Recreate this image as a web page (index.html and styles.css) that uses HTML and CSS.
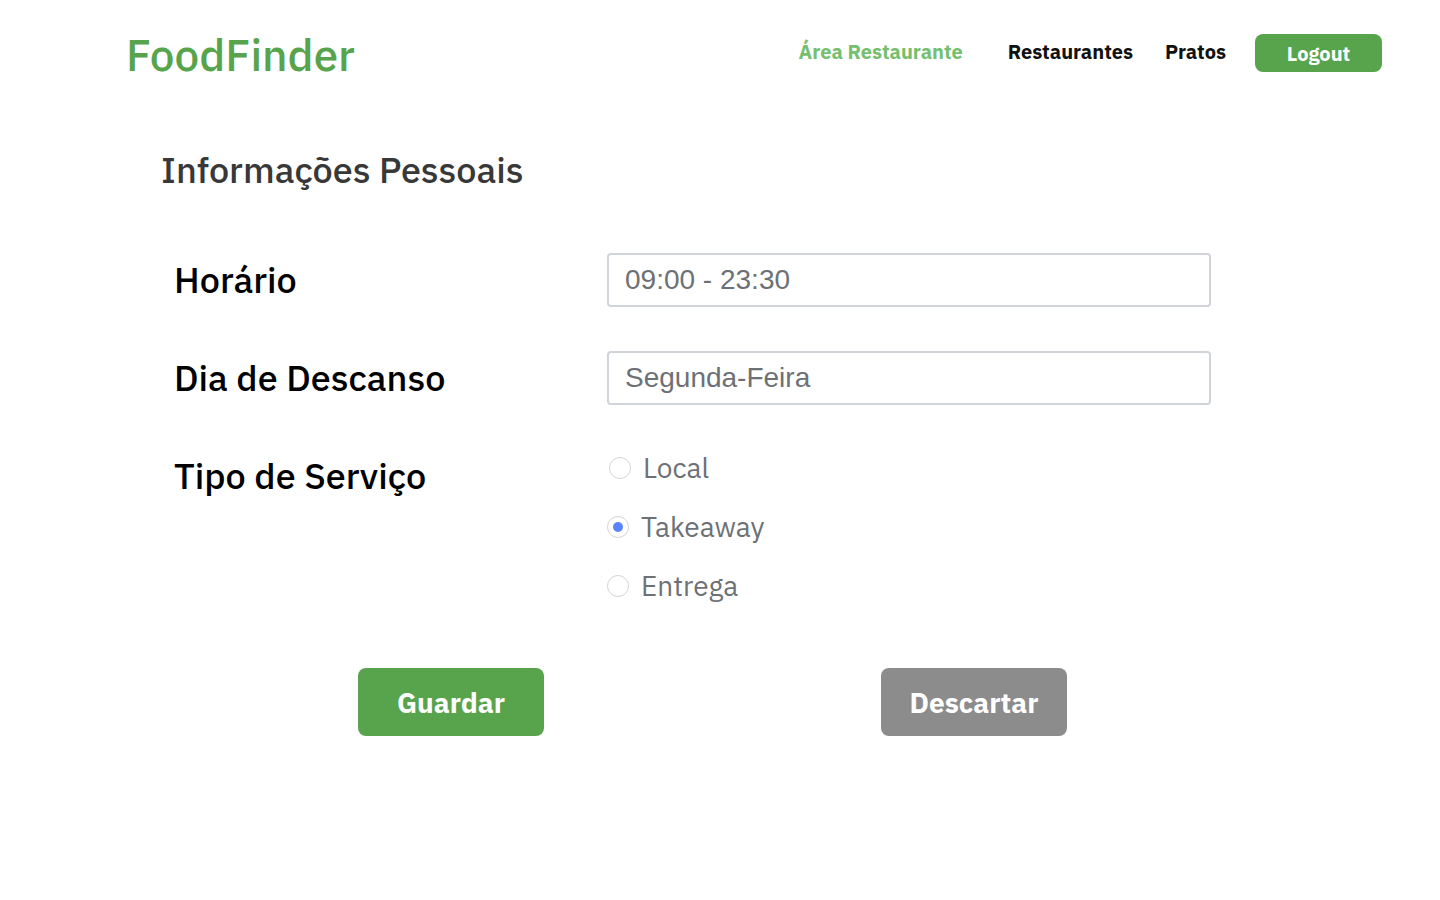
FILE: index.html
```html
<!DOCTYPE html>
<html lang="pt">
<head>
<meta charset="utf-8">
<meta name="viewport" content="width=device-width, initial-scale=1">
<title>FoodFinder</title>
<link rel="stylesheet" href="styles.css">
</head>
<body>
<header class="header">
  <a class="brand" href="#">FoodFinder</a>
  <nav class="nav">
    <a class="nav-link nav-link-active" href="#">Área Restaurante</a>
    <a class="nav-link" href="#">Restaurantes</a>
    <a class="nav-link nav-link-last" href="#">Pratos</a>
    <button class="logout" type="button">Logout</button>
  </nav>
</header>
<main class="main">
  <h1 class="title">Informações Pessoais</h1>
  <form class="form">
    <div class="row">
      <label class="label" for="horario">Horário</label>
      <input class="input" id="horario" type="text" value="09:00 - 23:30">
    </div>
    <div class="row">
      <label class="label" for="descanso">Dia de Descanso</label>
      <input class="input" id="descanso" type="text" value="Segunda-Feira">
    </div>
    <div class="row" role="radiogroup" aria-labelledby="servico">
      <span class="label" id="servico">Tipo de Serviço</span>
      <div class="options">
        <label class="option option-first"><input class="radio" type="radio" name="servico">Local</label>
        <label class="option"><input class="radio" type="radio" name="servico" checked>Takeaway</label>
        <label class="option"><input class="radio" type="radio" name="servico">Entrega</label>
      </div>
    </div>
    <div class="actions">
      <button class="button button-save" type="button">Guardar</button>
      <button class="button button-discard" type="button">Descartar</button>
    </div>
  </form>
</main>
</body>
</html>
```
FILE: styles.css
```css
* { box-sizing: border-box; }
body {
  margin: 0;
  background: #fff;
  color: #000;
  font-family: "IBM Plex Sans", "Noto Sans", sans-serif;
}
a { text-decoration: none; }
button { border: 0; font-family: inherit; font-weight: 700; color: #fff; cursor: pointer; }
.header {
  display: flex;
  justify-content: space-between;
  padding: 26px 58px 0 126px;
}
.brand { color: #58a44c; font-size: 44px; line-height: 58px; font-weight: 500; }
.nav { display: flex; align-items: flex-start; padding-top: 8px; }
.nav-link { margin-right: 32px; color: #111; font-size: 20px; line-height: 36px; font-weight: 700; }
.nav-link-active { margin-right: 45px; color: #77bf70; }
.nav-link-last { margin-right: 29px; }
.logout {
  width: 127px;
  height: 38px;
  padding: 0;
  border-radius: 8px;
  background: #58a44c;
  font-size: 20px;
}
.main { padding: 62px 229px 40px 161px; }
.title { margin: 0; color: #383838; font-size: 36px; line-height: 48px; font-weight: 500; }
.form { padding: 59px 0 0 13px; }
.row {
  display: grid;
  grid-template-columns: 433px 1fr;
  align-items: start;
  margin-bottom: 44px;
}
.label { font-size: 36px; line-height: 54px; font-weight: 500; }
.input {
  width: 100%;
  height: 54px;
  padding: 0 16px;
  border: 2px solid #d0d4d8;
  border-radius: 4px;
  background: #fff;
  color: #6d7176;
  font-family: "Liberation Sans", Arial, sans-serif;
  font-size: 28px;
}
.options { display: flex; flex-direction: column; gap: 22px; }
.option { display: flex; align-items: center; gap: 12px; color: #6d7176; font-size: 28px; line-height: 37px; }
.option-first { padding-left: 2px; }
.radio {
  appearance: none;
  display: grid;
  place-items: center;
  width: 22px;
  height: 22px;
  margin: 0;
  border: 1px solid #d4d4d4;
  border-radius: 50%;
  background: #fff;
}
.radio:checked::before {
  content: "";
  width: 10px;
  height: 10px;
  border-radius: 50%;
  background: #5b84fc;
}
.actions { display: flex; gap: 337px; padding: 20px 0 0 184px; }
.button { width: 186px; height: 68px; padding: 0; border-radius: 8px; font-size: 28px; }
.button-save { background: #58a44c; }
.button-discard { background: #8c8c8c; }
```
